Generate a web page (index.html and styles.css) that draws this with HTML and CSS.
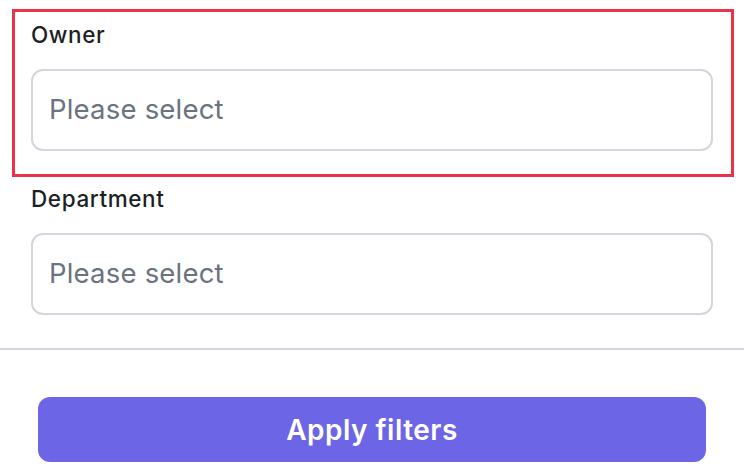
FILE: index.html
```html
<!DOCTYPE html>
<html lang="en">
<head>
<meta charset="utf-8">
<title>Filters</title>
<link rel="stylesheet" href="styles.css">
</head>
<body>
<div class="panel">
  <div class="fields">
    <div class="field">
      <label class="label">Owner</label>
      <div class="select"><span class="placeholder">Please select</span></div>
    </div>
    <div class="field">
      <label class="label">Department</label>
      <div class="select"><span class="placeholder">Please select</span></div>
    </div>
  </div>
  <div class="divider"></div>
  <div class="actions">
    <button class="apply">Apply filters</button>
  </div>
  <div class="highlight"></div>
</div>
</body>
</html>
```

FILE: styles.css
```css
* { box-sizing: border-box; }
html, body { margin: 0; padding: 0; background: #ffffff; }
body {
  font-family: Inter, "Noto Sans", sans-serif;
  width: 744px;
  height: 470px;
  overflow: hidden;
}
.panel {
  position: relative;
  height: 470px;
}
.fields {
  display: flex;
  flex-direction: column;
  gap: 33px;
  padding: 20px 31px 0 31px;
}
.field {
  display: flex;
  flex-direction: column;
  gap: 19px;
}
.label {
  font-size: 22.5px;
  line-height: 30px;
  font-weight: 500;
  letter-spacing: 0.6px;
  color: #1c1f24;
}
.select {
  height: 82px;
  border: 2px solid #d3d6dc;
  border-radius: 12px;
  display: flex;
  align-items: center;
  padding: 0 16px;
}
.placeholder {
  font-size: 27.5px;
  letter-spacing: 0.2px;
  color: #6b7280;
  line-height: 1;
}
.divider {
  margin-top: 33px;
  height: 2px;
  background: #d3d6dc;
}
.actions {
  padding: 47px 38px 0 38px;
}
.apply {
  width: 100%;
  height: 65px;
  border: none;
  border-radius: 12px;
  background: #6c65e6;
  color: #ffffff;
  font-family: Inter, "Noto Sans", sans-serif;
  font-size: 28px;
  font-weight: 600;
  letter-spacing: 0.5px;
}
.highlight {
  position: absolute;
  left: 12px;
  top: 9px;
  width: 722px;
  height: 168px;
  border: 3px solid #ea3249;
  pointer-events: none;
}
```
